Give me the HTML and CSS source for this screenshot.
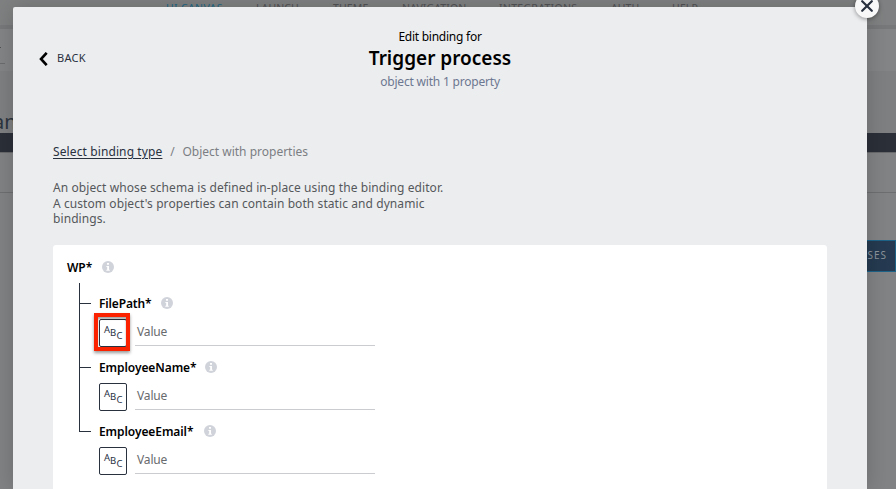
FILE: index.html
```html
<!DOCTYPE html>
<html lang="en">
<head>
<meta charset="utf-8">
<title>Edit binding</title>
<link rel="stylesheet" href="styles.css">
</head>
<body>
<div class="page">
  <nav class="nav"><span class="active nav-canvas">UI CANVAS</span><span class="nav-launch">LAUNCH</span><span class="nav-theme">THEME</span><span class="nav-navigation">NAVIGATION</span><span class="nav-integrations">INTEGRATIONS</span><span class="nav-auth">AUTH</span><span>HELP</span></nav>
  <div class="toolbar"><span class="field"></span></div>
  <div class="heading"><span>an</span></div>
  <div class="dark"></div>
  <div class="tabs"></div>
  <div class="content"><div class="process">SSES</div></div>
</div>
<main class="modal">
  <button class="close" aria-label="Close"><svg width="12" height="12" viewBox="0 0 12 12"><path d="M1.2 1.2 10.8 10.8M10.8 1.2 1.2 10.8" fill="none" stroke="#29313f" stroke-width="2.2" stroke-linecap="round"/></svg></button>
  <header class="header">
    <div class="back"><svg width="9" height="14" viewBox="0 0 9 14"><path d="M7.7 .8 2 7 7.7 13.2" fill="none" stroke="#000" stroke-width="2.6"/></svg><span>BACK</span></div>
    <div class="titles"><div class="over">Edit binding for</div><h1>Trigger process</h1><div class="sub">object with 1 property</div></div>
  </header>
  <div class="crumbs"><a>Select binding type</a><span class="slash">/</span><span class="current">Object with properties</span></div>
  <p class="description">An object whose schema is defined in-place using the binding editor.<br>A custom object's properties can contain both static and dynamic<br>bindings.</p>
  <section class="card">
    <div class="label"><span class="t-wp">WP*</span><svg class="info" viewBox="0 0 12 12"><circle cx="6" cy="6" r="6" fill="#d0d3da"/><path d="M5 2.1h2v1.7H5zM4.4 4.9H7v3.9h.8v1H4.3v-1h.9V5.9h-.8z" fill="#fff"/></svg></div>
    <div class="tree">
      <div class="node"><div class="label"><span class="t-path">FilePath*</span><svg class="info" viewBox="0 0 12 12"><circle cx="6" cy="6" r="6" fill="#d0d3da"/><path d="M5 2.1h2v1.7H5zM4.4 4.9H7v3.9h.8v1H4.3v-1h.9V5.9h-.8z" fill="#fff"/></svg></div><div class="control"><div class="abc marked"><i>A</i><i>B</i><i>C</i></div><div class="value">Value</div></div></div>
      <div class="node"><div class="label"><span class="t-name">EmployeeName*</span><svg class="info" viewBox="0 0 12 12"><circle cx="6" cy="6" r="6" fill="#d0d3da"/><path d="M5 2.1h2v1.7H5zM4.4 4.9H7v3.9h.8v1H4.3v-1h.9V5.9h-.8z" fill="#fff"/></svg></div><div class="control"><div class="abc"><i>A</i><i>B</i><i>C</i></div><div class="value">Value</div></div></div>
      <div class="node"><div class="label"><span class="t-email">EmployeeEmail*</span><svg class="info" viewBox="0 0 12 12"><circle cx="6" cy="6" r="6" fill="#d0d3da"/><path d="M5 2.1h2v1.7H5zM4.4 4.9H7v3.9h.8v1H4.3v-1h.9V5.9h-.8z" fill="#fff"/></svg></div><div class="control"><div class="abc"><i>A</i><i>B</i><i>C</i></div><div class="value">Value</div></div></div>
    </div>
  </section>
</main>
</body>
</html>
```
FILE: styles.css
```css
*, *::before, *::after { box-sizing: border-box; }
body { margin: 0; width: 896px; height: 489px; overflow: hidden; position: relative; font: 12px "Noto Sans", sans-serif; color: #000; }
.page { height: 489px; background: #7f8081; overflow: hidden; }
.nav { display: flex; height: 29px; padding: 1px 0 0 166px; border-bottom: 4px solid #777879; color: #515254; font-size: 10.5px; line-height: 14px; white-space: nowrap; letter-spacing: .1px; }
.nav .active { color: #206886; letter-spacing: .35px; }
.nav-canvas { width: 90px; }
.nav-launch { width: 77px; }
.nav-theme { width: 69px; }
.nav-navigation { width: 97px; }
.nav-integrations { width: 112px; letter-spacing: .3px; }
.nav-auth { width: 61px; }
.toolbar { height: 42px; padding-top: 18px; background: #838485; }
.field { display: block; width: 5px; height: 17px; background: linear-gradient(#4f5052, #4f5052) 0 0 / 1px 1px no-repeat; border-bottom: 1px solid #6b6c6e; }
.heading { height: 62px; padding-top: 37px; background: #7e7f80; color: #2c343e; font-size: 20px; line-height: 27px; }
.heading span { margin-left: -7px; }
.dark { height: 20px; background: #2b2f38; border-bottom: 1px solid #68696b; }
.tabs { height: 40px; background: #818283; border-bottom: 1px solid #6d6e70; }
.content { padding-top: 47px; background: #818283; height: 296px; }
.process { height: 32px; margin-left: 800px; padding-left: 60px; border: 1px solid #1d6287; background: #253a50; color: #8b939b; font-size: 10px; line-height: 28px; letter-spacing: 1px; }
.modal { position: absolute; left: 13px; top: 7px; width: 854px; height: 482px; padding: 22px 40px 0; background: #ecedef; border-radius: 2px 0 0 0; box-shadow: 0 0 20px rgba(0,0,0,.18); }
.close { position: absolute; right: -12px; top: -13px; width: 24px; height: 24px; padding: 0; border: 0; border-radius: 50%; display: flex; align-items: center; justify-content: center; background: #f8f8f9; box-shadow: 0 1px 4px rgba(0,0,0,.4); }
.header { display: grid; grid-template-columns: 100px 1fr 100px; height: 112px; }
.back { display: flex; height: 14px; margin: 23px 0 0 -14px; gap: 9px; align-items: center; color: #29313f; font-size: 11px; }
.back span { height: 16px; line-height: 14px; letter-spacing: .3px; }
.titles { text-align: center; }
.over { height: 16px; line-height: 16px; letter-spacing: -.25px; }
h1 { margin: 0; height: 28px; line-height: 27px; font-size: 19px; font-weight: 600; }
.sub { line-height: 17px; color: #6c7891; letter-spacing: -.2px; }
.crumbs { display: flex; height: 22px; line-height: 22px; color: #7b7e83; }
.crumbs a { color: #29313f; text-decoration: underline; text-underline-offset: 2px; letter-spacing: .11px; }
.slash { width: 20px; text-align: center; }
.description { height: 63px; margin: 16px 0 0; padding-top: 1px; font-size: 12px; line-height: 15.5px; color: #55585b; letter-spacing: .08px; }
.card { height: 260px; padding: 13px 14px; margin-top: 3px; background: #fff; border-radius: 3px; }
.label { display: flex; align-items: center; height: 18px; font-weight: 600; white-space: nowrap; letter-spacing: -.08px; }
.info { width: 12px; height: 12px; }
.t-wp { width: 35px; }
.t-path { width: 62px; letter-spacing: -.15px; }
.t-name { width: 106px; }
.t-email { width: 105px; }
.tree { margin: 7px 0 0 12px; padding-top: 11px; background: linear-gradient(#29313f, #29313f) 0 0 / 1px 149px no-repeat; }
.node { height: 64px; padding-left: 20px; background: linear-gradient(#29313f, #29313f) 0 9px / 12px 1px no-repeat; }
.control { display: flex; gap: 8px; margin-top: 7px; height: 28px; }
.abc { position: relative; display: flex; width: 28px; height: 28px; padding: 4px 0 0 4px; border: 1px solid #29313f; border-radius: 2px; color: #29313f; font-size: 9.5px; line-height: 12px; }
.abc i { width: 6px; font-style: normal; }
.abc i + i { padding-top: 3px; width: 6.5px; }
.abc i + i + i { padding-top: 6px; }
.marked::after { content: ""; position: absolute; left: -6px; top: -7px; width: 36px; height: 38px; border: 4px solid #fb2200; box-shadow: 0 2px 3px rgba(0,0,0,.4), inset 0 2px 2px rgba(0,0,0,.35); }
.value { width: 240px; height: 27px; padding-left: 2px; border-bottom: 1px solid #cbcccf; color: #686a6d; line-height: 25px; letter-spacing: -.15px; }
```
